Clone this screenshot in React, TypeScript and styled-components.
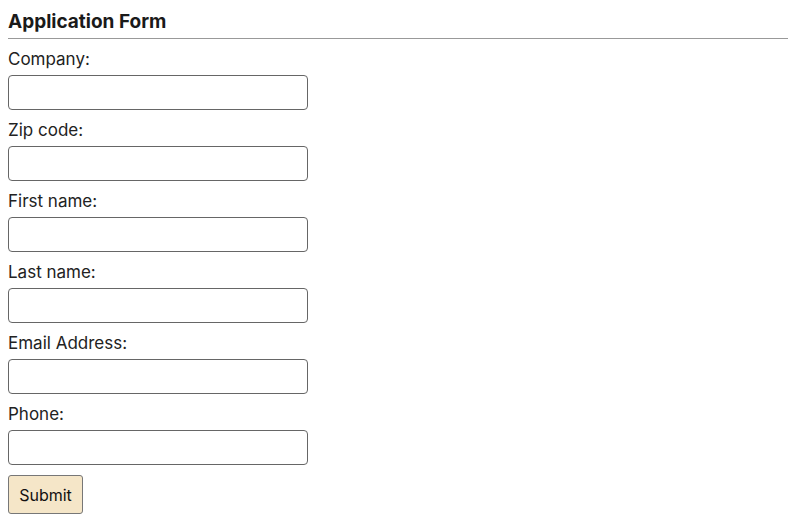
import styled, { createGlobalStyle } from 'styled-components';

const GlobalStyle = createGlobalStyle`
  body {
    margin: 8px;
    background: #fff;
    color: #222;
    font-family: Inter, "Noto Sans", sans-serif;
  }
`;

const Form = styled.form`
  display: flex;
  flex-direction: column;
`;

const Title = styled.h3`
  margin: 0 2px 10px 0;
  padding: 2px 0 4px;
  font-size: 19px;
  line-height: 24px;
  font-weight: 700;
  color: #1a1a1a;
  border-bottom: 1px solid #999;
`;

const Field = styled.div`
  display: flex;
  flex-direction: column;
  align-items: flex-start;
  margin-bottom: 10px;
`;

const Label = styled.label`
  font-size: 17px;
  line-height: 20px;
  color: #222;
  margin-bottom: 6px;
`;

const Input = styled.input`
  box-sizing: border-box;
  width: 300px;
  height: 35px;
  border: 1px solid #666;
  border-radius: 4px;
  padding: 0 8px;
  font: inherit;
  background: #fff;
`;

const SubmitButton = styled.button`
  align-self: flex-start;
  box-sizing: border-box;
  width: 75px;
  height: 39px;
  border: 1px solid #777;
  border-radius: 3px;
  background: #f5e6c8;
  color: #111;
  font-family: Inter, "Noto Sans", sans-serif;
  font-size: 16px;
  cursor: pointer;
`;

const fields = [
  { id: 'company', label: 'Company:' },
  { id: 'zip', label: 'Zip code:' },
  { id: 'first', label: 'First name:' },
  { id: 'last', label: 'Last name:' },
  { id: 'email', label: 'Email Address:' },
  { id: 'phone', label: 'Phone:' },
];

export default function App() {
  return (
    <>
      <GlobalStyle />
      <Form onSubmit={(e) => e.preventDefault()}>
        <Title>Application Form</Title>
        {fields.map((f) => (
          <Field key={f.id}>
            <Label htmlFor={f.id}>{f.label}</Label>
            <Input id={f.id} type="text" />
          </Field>
        ))}
        <SubmitButton type="submit">Submit</SubmitButton>
      </Form>
    </>
  );
}
